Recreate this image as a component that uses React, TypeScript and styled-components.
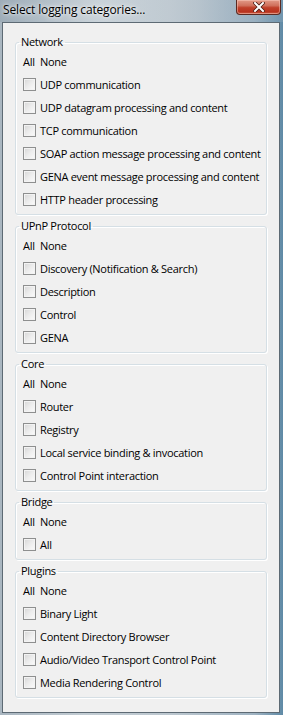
import styled, { createGlobalStyle } from "styled-components";

const GlobalStyle = createGlobalStyle`
  html, body {
    margin: 0;
    padding: 0;
  }
  body {
    font-family: "Segoe UI", "Open Sans", "Noto Sans", sans-serif;
    background: #9fb0bd;
  }
`;

const Window = styled.div`
  width: 283px;
  height: 715px;
  display: flex;
  flex-direction: column;
  background: linear-gradient(
    to right,
    #a9b6c0 0%,
    #c2ccd3 30%,
    #bcc7cf 60%,
    #9fb3c2 90%,
    #5f8aa6 100%
  );
  overflow: hidden;
`;

const TitleBar = styled.div`
  height: 22px;
  display: flex;
  align-items: flex-start;
  justify-content: space-between;
  padding: 0 2px 0 3px;
  background: linear-gradient(
    to right,
    rgba(150, 166, 178, 0.6),
    rgba(210, 218, 224, 0.5) 35%,
    rgba(190, 200, 208, 0.4) 70%,
    rgba(130, 160, 182, 0.5)
  );
`;

const Title = styled.span`
  margin-top: 2px;
  font-size: 12px;
  line-height: 16px;
  letter-spacing: -0.15px;
  color: #000;
  text-shadow: 0 0 6px rgba(255, 255, 255, 0.9), 0 0 3px rgba(255, 255, 255, 0.8);
`;

const CloseButton = styled.div`
  width: 45px;
  height: 15px;
  box-sizing: border-box;
  display: flex;
  align-items: center;
  justify-content: center;
  border: 1px solid #5b2a22;
  border-top: none;
  border-radius: 0 0 4px 4px;
  background: linear-gradient(
    to bottom,
    #e29a88 0%,
    #d0705c 40%,
    #c0402a 55%,
    #b8321e 85%,
    #cf6a50 100%
  );
  box-shadow: inset 0 0 0 1px rgba(255, 210, 200, 0.45);
`;

const Frame = styled.div`
  flex: 1;
  display: flex;
  min-height: 0;
  padding: 0 3px 2px 2px;
`;

const Panel = styled.div`
  flex: 1;
  min-width: 0;
  display: flex;
  flex-direction: column;
  gap: 4px;
  box-sizing: border-box;
  padding: 12px 12px 0;
  background: #f0f0f0;
  border: 1px solid #5d6a74;
`;

const Group = styled.fieldset`
  margin: 0;
  min-width: 0;
  padding: 1px 6px 3px 7px;
  border: 1px solid #d5dfe5;
  border-radius: 3px;
  box-shadow: inset 1px 1px 0 #fff, 1px 1px 0 #fff;
`;

const Legend = styled.legend`
  margin-left: -4px;
  padding: 0 2px;
  font-size: 11px;
  line-height: 14px;
  letter-spacing: -0.3px;
  color: #000;
`;

const Row = styled.div`
  display: grid;
  grid-template-columns: 17px auto;
  align-items: center;
  height: 23px;
  font-size: 11px;
  letter-spacing: -0.3px;
  color: #000;
  white-space: nowrap;
`;

const Check = styled.span`
  width: 13px;
  height: 13px;
  box-sizing: border-box;
  border: 1px solid #8e8f8f;
  background: linear-gradient(135deg, #d6d6d6 0%, #ececec 50%, #fbfbfb 100%);
  box-shadow: inset 0 0 0 1px #f3f3f3;
`;

const groups: { name: string; items: string[] }[] = [
  {
    name: "Network",
    items: [
      "UDP communication",
      "UDP datagram processing and content",
      "TCP communication",
      "SOAP action message processing and content",
      "GENA event message processing and content",
      "HTTP header processing",
    ],
  },
  {
    name: "UPnP Protocol",
    items: ["Discovery (Notification & Search)", "Description", "Control", "GENA"],
  },
  {
    name: "Core",
    items: [
      "Router",
      "Registry",
      "Local service binding & invocation",
      "Control Point interaction",
    ],
  },
  { name: "Bridge", items: ["All"] },
  {
    name: "Plugins",
    items: [
      "Binary Light",
      "Content Directory Browser",
      "Audio/Video Transport Control Point",
      "Media Rendering Control",
    ],
  },
];

function CloseIcon() {
  return (
    <svg width="12" height="10" viewBox="0 0 12 10">
      <path
        d="M2 1 L10 9 M10 1 L2 9"
        stroke="#4a1a12"
        strokeWidth="3.6"
        strokeLinecap="square"
      />
      <path
        d="M2 1 L10 9 M10 1 L2 9"
        stroke="#fff"
        strokeWidth="2"
        strokeLinecap="square"
      />
    </svg>
  );
}

export default function App() {
  return (
    <>
      <GlobalStyle />
      <Window>
        <TitleBar>
          <Title>Select logging categories...</Title>
          <CloseButton>
            <CloseIcon />
          </CloseButton>
        </TitleBar>
        <Frame>
          <Panel>
            {groups.map((g) => (
              <Group key={g.name}>
                <Legend>{g.name}</Legend>
                <Row>
                  <span>All</span>
                  <span>None</span>
                </Row>
                {g.items.map((item) => (
                  <Row key={item}>
                    <Check />
                    <span>{item}</span>
                  </Row>
                ))}
              </Group>
            ))}
          </Panel>
        </Frame>
      </Window>
    </>
  );
}
